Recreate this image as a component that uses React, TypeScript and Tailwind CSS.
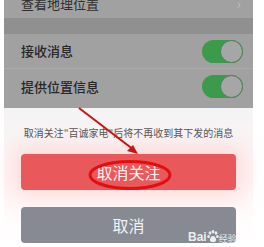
import React from 'react';

const Toggle = () => (
  <div className="relative h-[23px] w-[41px] rounded-full bg-[#3c9a4b]">
    <div className="absolute right-0 top-0 h-[23px] w-[23px] rounded-full border-[1.5px] border-[#4f7f56] bg-[#a6a6a6]" />
  </div>
);

const Paw = () => (
  <svg width="12" height="13" viewBox="0 0 12 13" className="mb-[1px]">
    <g fill="rgba(255,255,255,0.85)">
      <ellipse cx="3" cy="3" rx="1.4" ry="1.8" />
      <ellipse cx="6" cy="1.8" rx="1.4" ry="1.8" />
      <ellipse cx="9" cy="3" rx="1.4" ry="1.8" />
      <ellipse cx="1.6" cy="6.5" rx="1.3" ry="1.6" />
      <ellipse cx="10.4" cy="6.5" rx="1.3" ry="1.6" />
      <path d="M6 6 C3.5 6 2.5 9.5 3 11 C4 12.5 8 12.5 9 11 C9.5 9.5 8.5 6 6 6 Z" />
    </g>
  </svg>
);

export default function App() {
  const font = { fontFamily: '"Noto Sans CJK SC", "Noto Sans", sans-serif' };
  return (
    <div className="relative h-[247px] w-[264px] overflow-hidden bg-white" style={font}>
      <div className="ml-[4px] w-[249px] bg-[#a1a1a1]">
        <div className="flex h-[18px] items-start justify-between overflow-hidden pl-[17px] pr-[12px]">
          <span className="-mt-[4px] text-[13px] leading-[16px] text-[#2f2f2f]">查看地理位置</span>
          <span className="-mt-[5px] text-[14px] leading-[16px] text-[#bdbdbd]">›</span>
        </div>
        <div className="h-[16px] bg-[#909090]" />
        <div className="flex h-[35px] items-center justify-between border-b border-[#ababab] pl-[17px] pr-[10px]">
          <span className="text-[13px] font-medium text-[#262626]">接收消息</span>
          <Toggle />
        </div>
        <div className="flex h-[35px] items-center justify-between pl-[17px] pr-[10px]">
          <span className="text-[13px] font-medium text-[#262626]">提供位置信息</span>
          <Toggle />
        </div>
        <div className="h-[4px]" />
      </div>

      <div className="ml-[4px] w-[249px] bg-gradient-to-b from-[#f4f4f4] via-[#fff6f6] to-white pt-[18px]">
        <p className="text-center text-[10px] leading-[14px] text-[#555]">
          取消关注"百诚家电"后将不再收到其下发的消息
        </p>
        <div className="mt-[14px] px-[17px]">
          <div className="flex h-[36px] items-center justify-center rounded-[4px] bg-[#e9585b] text-[16px] text-[#fff0f0] shadow-[0_0_22px_8px_rgba(255,170,170,0.35)]">
            取消关注
          </div>
          <div className="mt-[17px] flex h-[36px] items-center justify-center rounded-[4px] bg-[#878a92] text-[16px] text-[#f2f2f2]">
            取消
          </div>
        </div>
      </div>

      <svg className="absolute left-0 top-0" width="264" height="247" viewBox="0 0 264 247">
        <line x1="79" y1="108" x2="134" y2="150" stroke="#c81414" strokeWidth="2" />
        <polygon points="138,154 127,151 133,145" fill="#c81414" />
        <ellipse cx="130" cy="175" rx="40" ry="13.5" fill="none" stroke="#e01010" strokeWidth="3" />
      </svg>

      <div className="absolute left-[188px] top-[230px] flex items-end text-white/85">
        <span className="text-[12px] font-bold leading-[13px]" style={{ fontFamily: '"Liberation Sans", sans-serif' }}>Bai</span>
        <Paw />
        <span className="text-[9px] leading-[11px]">经验</span>
      </div>
    </div>
  );
}
